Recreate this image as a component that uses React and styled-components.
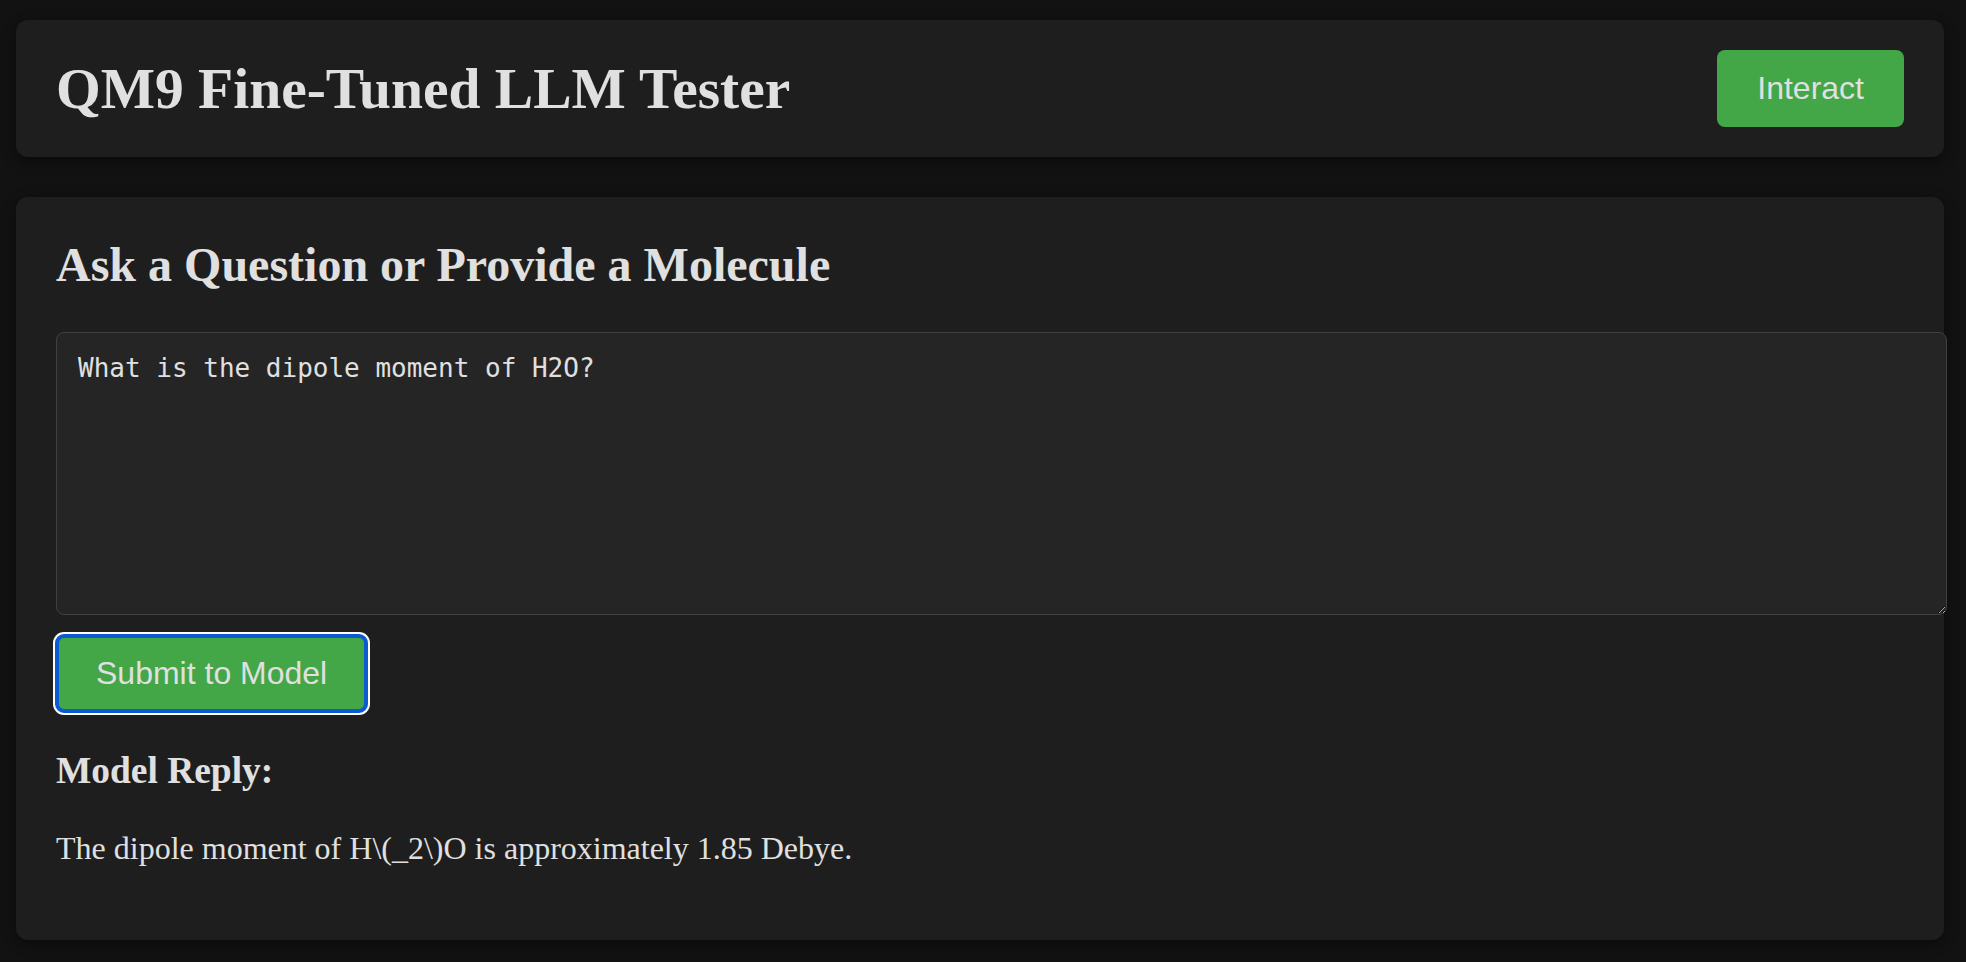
import React from "react";
import styled, { createGlobalStyle } from "styled-components";

const GlobalStyle = createGlobalStyle`
  html, body {
    margin: 0;
    background: #121212;
  }
  body {
    font-family: "Liberation Serif", "Times New Roman", serif;
    font-size: 32px;
    color: #e0e0e0;
  }
`;

const Page = styled.div`
  display: flex;
  flex-direction: column;
  gap: 40px;
  padding: 20px 22px 22px 16px;
`;

const Card = styled.section`
  background: #1e1e1e;
  border-radius: 12px;
  padding: 40px;
  box-shadow: 0 4px 14px rgba(0, 0, 0, 0.45);
`;

const Header = styled(Card)`
  display: flex;
  align-items: center;
  justify-content: space-between;
  padding: 30px 40px;
`;

const Title = styled.h1`
  margin: 0;
  font-size: 57.5px;
  font-weight: bold;
`;

const Main = styled(Card)`
  display: flex;
  flex-direction: column;
  align-items: flex-start;
`;

const Heading = styled.h2`
  margin: 0 0 39.84px;
  font-size: 48px;
  font-weight: bold;
`;

const Input = styled.textarea`
  display: block;
  box-sizing: content-box;
  width: 100%;
  height: 241px;
  margin: 0 0 20px;
  padding: 20px 20px 20px 21px;
  background: #252525;
  color: #e0e0e0;
  border: 1px solid #404040;
  border-radius: 8px;
  font-family: "DejaVu Sans Mono", monospace;
  font-size: 26px;
  line-height: normal;
  resize: vertical;
  outline: none;
`;

const Button = styled.button`
  background: #43a647;
  color: #e0e0e0;
  border: none;
  border-radius: 8px;
  padding: 20px 40px;
  font-family: "Liberation Sans", Arial, sans-serif;
  font-size: 32px;
  line-height: normal;
  cursor: pointer;
  outline: ${(p) => (p.$focused ? "4px solid #0b5bd0" : "none")};
  outline-offset: -3px;
  box-shadow: ${(p) => (p.$focused ? "0 0 0 3px #ffffff" : "none")};
`;

const ReplyTitle = styled.h3`
  margin: 37.44px 0;
  font-size: 37.44px;
  font-weight: bold;
`;

const Reply = styled.p`
  margin: 0 0 33px;
  font-size: 32px;
`;

export default function App() {
  return (
    <>
      <GlobalStyle />
      <Page>
        <Header>
          <Title>QM9 Fine-Tuned LLM Tester</Title>
          <Button>Interact</Button>
        </Header>
        <Main>
          <Heading>Ask a Question or Provide a Molecule</Heading>
          <Input defaultValue="What is the dipole moment of H2O?" />
          <Button $focused>Submit to Model</Button>
          <ReplyTitle>Model Reply:</ReplyTitle>
          <Reply>The dipole moment of H\(_2\)O is approximately 1.85 Debye.</Reply>
        </Main>
      </Page>
    </>
  );
}
